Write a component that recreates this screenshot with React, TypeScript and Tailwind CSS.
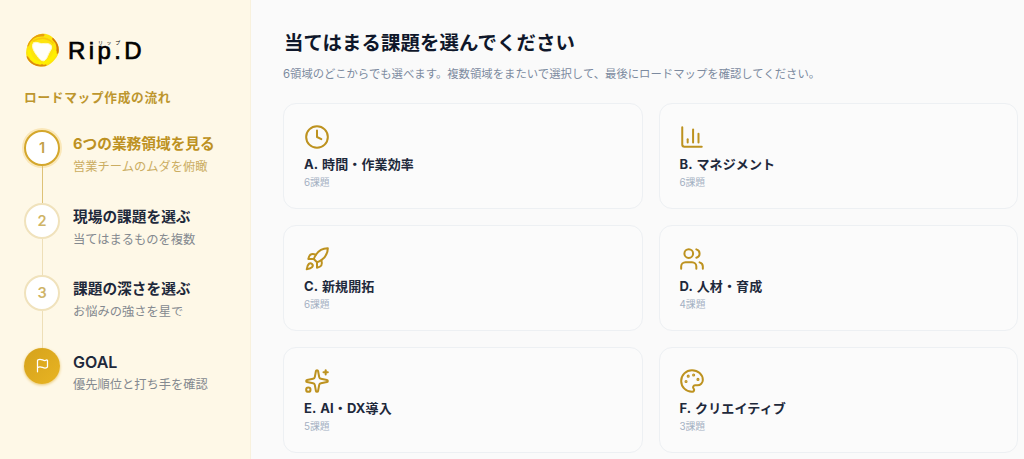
import {
	Clock,
	Flag,
	Palette,
	Rocket,
	Sparkles,
	Users,
	type LucideIcon,
} from "lucide-react";
import clsx from "clsx";

type Step = {
	label: string;
	title: string;
	description: string;
	active?: boolean;
	goal?: boolean;
};

const steps: Step[] = [
	{
		label: "1",
		title: "6つの業務領域を見る",
		description: "営業チームのムダを俯瞰",
		active: true,
	},
	{
		label: "2",
		title: "現場の課題を選ぶ",
		description: "当てはまるものを複数",
	},
	{
		label: "3",
		title: "課題の深さを選ぶ",
		description: "お悩みの強さを星で",
	},
	{
		label: "",
		title: "GOAL",
		description: "優先順位と打ち手を確認",
		goal: true,
	},
];

// Bar chart with an L-shaped axis
const ChartIcon = () => (
	<svg
		viewBox="0 0 24 24"
		className="size-[26px]"
		fill="none"
		stroke="currentColor"
		strokeWidth="1.85"
		strokeLinecap="round"
		strokeLinejoin="round"
	>
		<path d="M3 3v16a2 2 0 0 0 2 2h16" />
		<path d="M18 17V9" />
		<path d="M13 17V5" />
		<path d="M8 17v-3" />
	</svg>
);

const areas: { title: string; count: string; icon: LucideIcon | null }[] = [
	{ title: "A. 時間・作業効率", count: "6課題", icon: Clock },
	{ title: "B. マネジメント", count: "6課題", icon: null },
	{ title: "C. 新規開拓", count: "6課題", icon: Rocket },
	{ title: "D. 人材・育成", count: "4課題", icon: Users },
	{ title: "E. AI・DX導入", count: "5課題", icon: Sparkles },
	{ title: "F. クリエイティブ", count: "3課題", icon: Palette },
];

const Logo = () => (
	<div className="flex h-9 items-center">
		<svg viewBox="0 0 36 36" className="size-9 shrink-0">
			<defs>
				<filter id="soft" x="-20%" y="-20%" width="140%" height="140%">
					<feGaussianBlur stdDeviation="0.7" />
				</filter>
				<clipPath id="blob">
					<path d="M17 2c6-1 11 2 14 6 3 3.500 4.500 8 3.500 12.500-.8 4-3 6.500-5.500 9-3 3.500-7.500 5.500-12.500 5-5-.3-10-2.500-13-7.500-2-4-1.800-9 0-13.500C5.500 7.500 11 2.800 17 2Z" />
				</clipPath>
			</defs>
			<g clipPath="url(#blob)">
				<rect width="36" height="36" fill="#fde40c" />
				<g filter="url(#soft)" fill="none" strokeLinecap="round">
					<path d="M3.500 13C6 6 12 2.500 19 3" stroke="#e9a010" strokeWidth="3" />
					<path d="M30 7c4 3.500 5 8 4 13" stroke="#d57c10" strokeWidth="3.600" />
					<path d="M3 26c4 7 11 9 18 7.500" stroke="#dc8a10" strokeWidth="3.200" />
					<path d="M9 9c7-4 14-4 20 2" stroke="#f9c80c" strokeWidth="1.500" />
					<path d="M5 19c1 7 5 11 11 12" stroke="#fff200" strokeWidth="3" />
					<path d="M20 31c6-2 10-5 11-11" stroke="#fff000" strokeWidth="3.500" />
					<path
						d="M9.500 11c3-2 6 1 9.500.6 3-.4 7-.4 8.500 2.400 1 3-1.800 5-3 8-1.200 3.200-2.500 6.500-5 6.800-3 .2-4.500-2.600-6.500-5.200C10.500 20.500 6.500 14 9.500 11Z"
						fill="#fffffa"
						stroke="#fffac8"
						strokeWidth="1"
					/>
				</g>
			</g>
		</svg>
		<div className="relative mt-px ml-2 font-['Liberation_Sans','Noto_Sans_CJK_JP',sans-serif] text-[24px] leading-9 tracking-[3.4px] text-black [-webkit-text-stroke:0.7px_black]">
			Rip.D
			<span className="absolute top-[5px] left-[30px] text-[5px] leading-[8px] tracking-[3.6px] whitespace-nowrap [-webkit-text-stroke:0]">
				リップ
			</span>
		</div>
	</div>
);

const StepItem = ({ step, last }: { step: Step; last: boolean }) => (
	<li className={clsx("flex gap-[13px]", !last && "h-[72.6px]")}>
		<div className="flex w-9 flex-col items-center">
			<div
				className={clsx(
					"flex size-9 shrink-0 items-center justify-center rounded-full text-[14.5px] font-semibold",
					step.active &&
						"border-2 border-[#d4a72c] bg-white text-[#c3a04a] shadow-[0_0_0_2px_#fae7b8]",
					step.goal &&
						"bg-linear-to-br from-[#d5a21d] to-[#e8b422] text-white shadow-[0_1px_3px_#e8c66e]",
					!step.active &&
						!step.goal &&
						"border-2 border-[#f0e2bc] bg-white text-[#cfb467]",
				)}
			>
				{step.goal ? <Flag className="size-[15px]" strokeWidth={2} /> : step.label}
			</div>
			{!last && (
				<div
					className={clsx(
						"w-px grow",
						step.active ? "bg-[#dec277]" : "bg-[#eedfb8]",
					)}
				/>
			)}
		</div>
		<div className="pt-[3px] whitespace-nowrap">
			<p
				className={clsx(
					"leading-[22px]",
					step.goal ? "text-[16px] font-semibold" : "text-[14.7px] font-bold",
					step.active ? "text-[#bd9122]" : "text-[#1e293b]",
				)}
			>
				{step.title}
			</p>
			<p
				className={clsx(
					"mt-px text-[12.25px] leading-[22px]",
					step.active ? "text-[#cbad62]" : "text-[#84898f]",
				)}
			>
				{step.description}
			</p>
		</div>
	</li>
);

const App = () => {
	return (
		<div className="flex h-[459px] w-[1024px] overflow-hidden bg-[#fafafa] font-[Inter,'Noto_Sans_CJK_JP',sans-serif]">
			<aside className="w-[251px] shrink-0 border-r border-[#f8f1dd] bg-[#fef8e7] pt-8 pl-6">
				<Logo />
				<p className="mt-5 text-[12.7px] leading-5 font-bold tracking-[0.7px] text-[#bd962e]">
					ロードマップ作成の流れ
				</p>
				<ol className="mt-[22px]">
					{steps.map((step, index) => (
						<StepItem
							key={step.title}
							step={step}
							last={index === steps.length - 1}
						/>
					))}
				</ol>
			</aside>

			<main className="grow pt-[29px] pr-1.5 pl-8">
				<h1 className="ml-px text-[19.4px] leading-7 font-bold tracking-[0.1px] text-[#0f172a]">
					当てはまる課題を選んでください
				</h1>
				<p className="mt-[7px] text-[11.36px] leading-5 text-[#7c8a9f]">
					6領域のどこからでも選べます。複数領域をまたいで選択して、最後にロードマップを確認してください。
				</p>
				<div className="mt-[19px] grid grid-cols-2 gap-4">
					{areas.map(({ title, count, icon: Icon }) => (
						<button
							type="button"
							key={title}
							className="flex h-[106px] flex-col items-start rounded-[13px] border border-[#edf0f3] bg-[#fbfbfb] px-5 pt-5 text-left"
						>
							<span className="-ml-[0.5px] text-[#bd921f]">
								{Icon ? (
									<Icon className="size-[26px]" strokeWidth={1.85} />
								) : (
									<ChartIcon />
								)}
							</span>
							<span className="mt-1 text-[13px] leading-5 font-bold tracking-[0.12px] [word-spacing:1px] text-[#1e293b]">
								{title}
							</span>
							<span className="mt-px text-[9.8px] leading-4 text-[#a3b0c2]">
								{count}
							</span>
						</button>
					))}
				</div>
			</main>
		</div>
	);
};

export default App;
